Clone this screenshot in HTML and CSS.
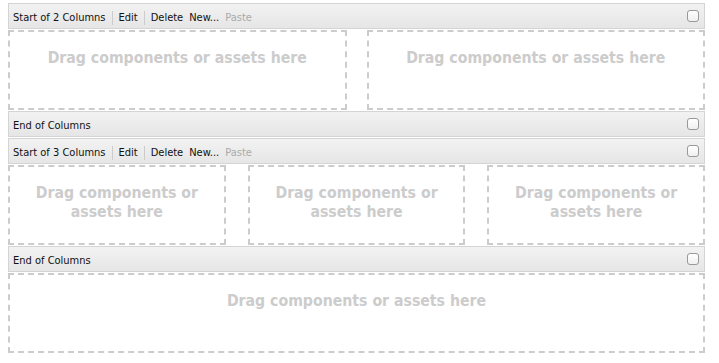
FILE: index.html
```html
<!DOCTYPE html>
<html lang="en">
<head>
    <meta charset="UTF-8">
    <title>Columns</title>
    <link rel="stylesheet" href="styles.css">
</head>
<body>
    <div class="page">
        <div class="bar">
            <span class="label">Start of 2 Columns</span>
            <span class="sep"></span>
            <span class="act">Edit</span>
            <span class="sep"></span>
            <span class="act">Delete</span>
            <span class="act">New...</span>
            <span class="act off">Paste</span>
            <span class="check"></span>
        </div>
        <div class="cols">
            <div class="drop">Drag components or assets here</div>
            <div class="drop">Drag components or assets here</div>
        </div>
        <div class="bar">
            <span class="label">End of Columns</span>
            <span class="check"></span>
        </div>
        <div class="bar">
            <span class="label">Start of 3 Columns</span>
            <span class="sep"></span>
            <span class="act">Edit</span>
            <span class="sep"></span>
            <span class="act">Delete</span>
            <span class="act">New...</span>
            <span class="act off">Paste</span>
            <span class="check"></span>
        </div>
        <div class="cols three">
            <div class="drop">Drag components or assets here</div>
            <div class="drop">Drag components or assets here</div>
            <div class="drop">Drag components or assets here</div>
        </div>
        <div class="bar">
            <span class="label">End of Columns</span>
            <span class="check"></span>
        </div>
        <div class="drop wide">Drag components or assets here</div>
    </div>
</body>
</html>
```

FILE: styles.css
```css
* {
    margin: 0;
    padding: 0;
    box-sizing: border-box;
}

body {
    background: #fff;
    font-family: "DejaVu Sans Condensed", "DejaVu Sans", sans-serif;
}

.page {
    width: 697px;
    margin: 3px 0 0 8px;
    display: flex;
    flex-direction: column;
    gap: 1px;
}

.bar {
    height: 26px;
    border: 1px solid #d4d4d4;
    background: linear-gradient(#f2f2f2, #e6e6e6);
    display: flex;
    align-items: center;
    gap: 6px;
    padding: 3px 5px 0 4px;
    font-size: 11px;
    color: #111;
}

.sep {
    width: 1px;
    height: 14px;
    background: #ccc;
}

.act.off {
    color: #aaa;
}

/* checkbox sits a bit higher than the text */
.check {
    margin-left: auto;
    margin-top: -3px;
    width: 12px;
    height: 12px;
    border: 1px solid #999;
    border-radius: 3px;
    background: linear-gradient(#fff, #f0f0f0);
}

.cols {
    display: flex;
    gap: 20px;
}

.cols .drop {
    flex: 1;
}

.cols.three {
    gap: 22px;
}

.drop {
    min-height: 80px;
    border: 2px dashed #ccc;
    padding: 16px 10px 0;
    text-align: center;
    font-weight: bold;
    font-size: 15.7px;
    line-height: 19px;
    color: #ccc;
}
```
